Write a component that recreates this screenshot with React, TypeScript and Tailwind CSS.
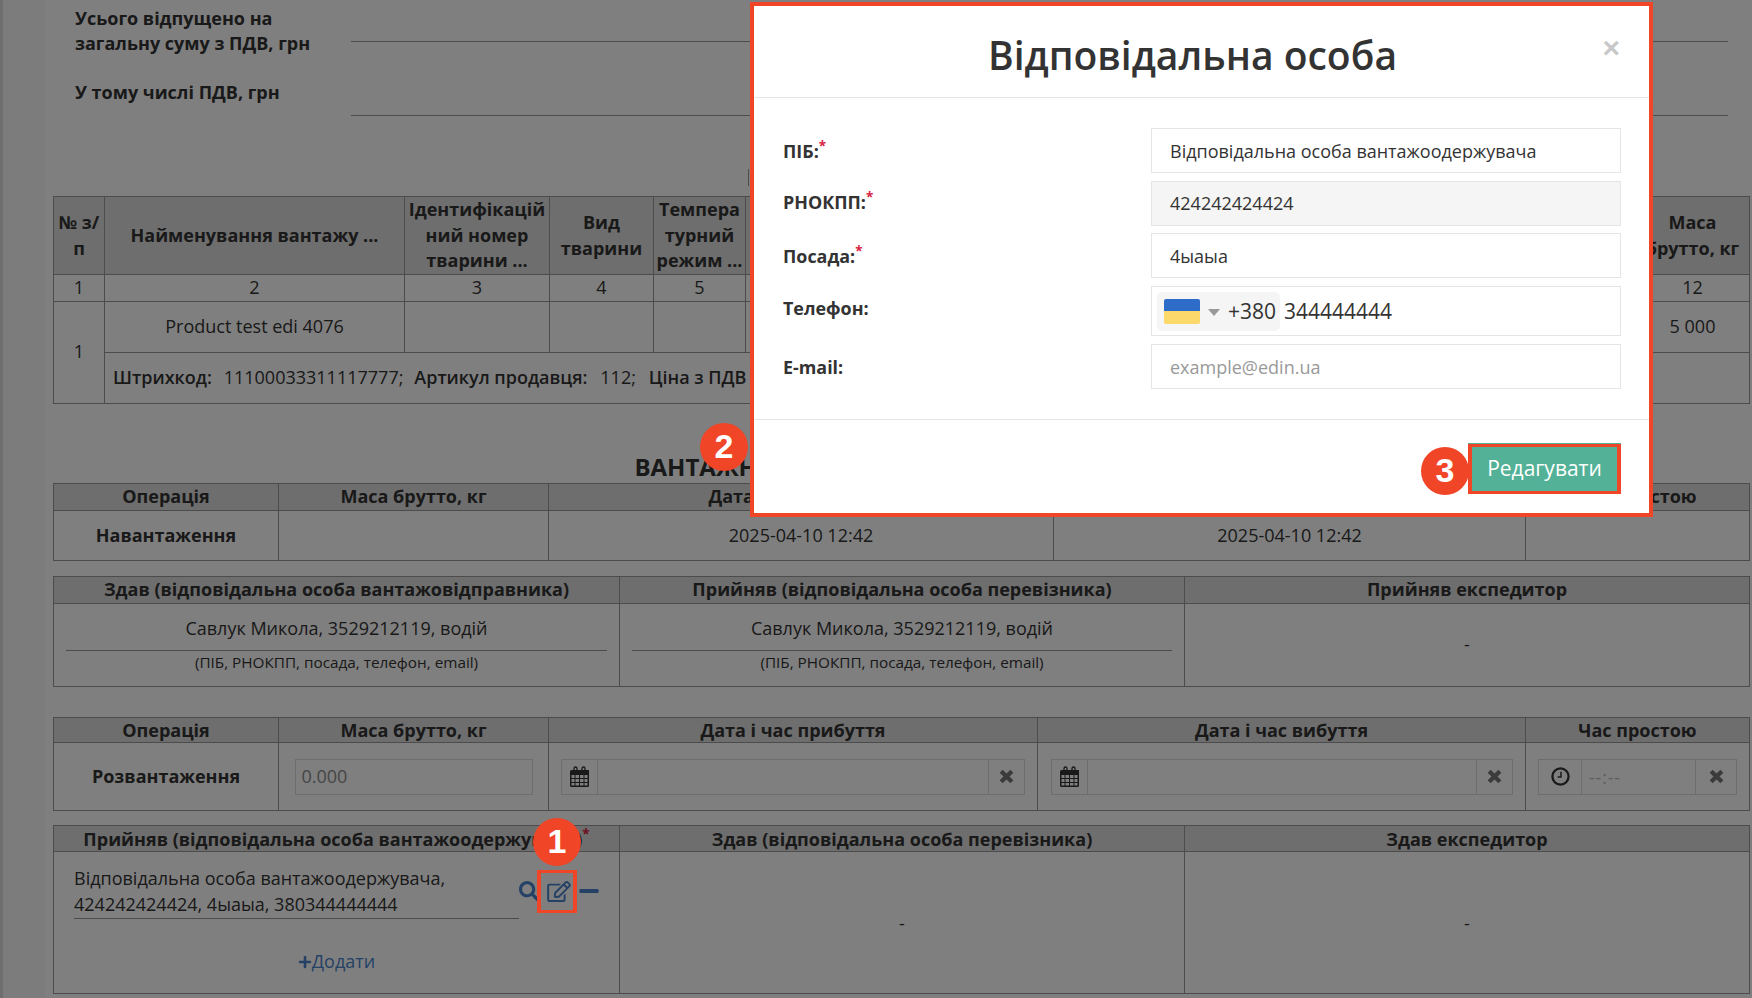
import { FaMinus, FaPlus, FaRegEdit, FaSearch } from 'react-icons/fa'

const th = 'border border-[#999] bg-[#dcdcdc] px-0 text-center align-middle font-bold'
const td = 'border border-[#999] text-center align-middle'

function CalendarIcon() {
  return (
    <svg viewBox="0 0 19 21" className="h-[21px] w-[19px] text-[#333]" fill="currentColor">
      <path d="M4 6V2.5a1.5 1.5 0 0 1 3 0V6M12 6V2.5a1.5 1.5 0 0 1 3 0V6" fill="none" stroke="currentColor" strokeWidth="1.3" />
      <path
        fillRule="evenodd"
        d="M1.5 4H19a0 0 0 0 1 0 0v15.5a1.5 1.5 0 0 1-1.5 1.5h-16A1.5 1.5 0 0 1 0 19.5v-14A1.5 1.5 0 0 1 1.5 4zM1.5 9v3h3V9zM5.5 9v3h3.5V9zM10 9v3h3.5V9zM14.5 9v3h3V9zM1.5 13v3h3v-3zM5.5 13v3h3.5v-3zM10 13v3h3.5v-3zM14.5 13v3h3v-3zM1.5 17v2.5h3V17zM5.5 17v2.5h3.5V17zM10 17v2.5h3.5V17zM14.5 17v2.5h3V17z"
      />
    </svg>
  )
}

function ClockIcon() {
  return (
    <svg viewBox="0 0 20 20" className="h-[19px] w-[19px] text-[#333]" fill="none" stroke="currentColor">
      <circle cx="10" cy="10" r="8.5" strokeWidth="2.4" />
      <path d="M10.5 5v5.5H7" strokeWidth="1.6" />
    </svg>
  )
}

function RemoveIcon() {
  return (
    <svg viewBox="0 0 14 14" className="h-[15px] w-[15px] text-[#777]" fill="none" stroke="currentColor" strokeWidth="4">
      <path d="M2 2l10 10M12 2L2 12" />
    </svg>
  )
}

function DateField({ width }: { width: string }) {
  return (
    <div className={`flex h-9 border border-[#ddd] bg-[#fff] ${width}`}>
      <span className="flex w-[36px] items-center justify-center border-r border-[#ddd]">
        <CalendarIcon />
      </span>
      <span className="flex-1" />
      <span className="flex w-[36px] items-center justify-center border-l border-[#ddd]">
        <RemoveIcon />
      </span>
    </div>
  )
}

function Badge({ n, className }: { n: number; className: string }) {
  return (
    <span
      className={`absolute flex h-12 w-12 items-center justify-center rounded-full bg-[#f04527] font-['Liberation_Sans',sans-serif] text-[34px] font-bold text-white ${className}`}
    >
      {n}
    </span>
  )
}

function Person({ className = '' }: { className?: string }) {
  return (
    <td className={`${td} h-[83px] px-[12px] ${className}`}>
      <div className="border-b border-[#999] pb-[9px] leading-[25px]">Савлук Микола, 3529212119, водій</div>
      <div className="pb-[2px] text-[15.3px] leading-[22px]">(ПІБ, РНОКПП, посада, телефон, email)</div>
    </td>
  )
}

function Field({ label, star, labelPad, mb, children }: { label: string; star?: boolean; labelPad: string; mb: string; children: React.ReactNode }) {
  return (
    <div className={`flex ${mb}`}>
      <div className={`w-[368px] text-[17.9px] leading-[25px] font-bold text-[#333] ${labelPad}`}>
        {label}
        {star ? <sup className="text-[#d8233f]">*</sup> : null}
      </div>
      {children}
    </div>
  )
}

export default function App() {
  return (
    <div className="relative flex h-[998px] w-[1752px] overflow-hidden bg-white font-['Open_Sans',sans-serif] text-[18px] leading-[25.5px] text-[#333]">
      <div className="w-[3px] bg-[#ddd]" />
      <div className="w-[43px] bg-[#f9f9f9]" />
      <main className="flex-1 pt-[6px] pr-[2px] pl-[8px]">
        <div className="flex">
          <div className="w-[298px] pl-[22px] leading-[25px] font-bold">
            Усього відпущено на
            <br />
            загальну суму з ПДВ, грн
          </div>
          <div className="mr-[22px] h-[36px] flex-1 border-b border-[#999]" />
        </div>
        <div className="mt-[24px] flex">
          <div className="w-[298px] pl-[22px] leading-[25px] font-bold">У тому числі ПДВ, грн</div>
          <div className="mr-[22px] h-[36px] flex-1 border-b border-[#999]" />
        </div>
        <div className="mt-[53px] ml-[695px] h-[17px] w-[100px] border-l border-[#999]" />
        <div className="h-[10px]" />

        <table className="w-[1696px] table-fixed border-collapse">
          <colgroup>
            <col className="w-[51px]" />
            <col className="w-[300px]" />
            <col className="w-[145px]" />
            <col className="w-[104px]" />
            <col className="w-[92px]" />
            <col className="w-[148px]" />
            <col className="w-[148px]" />
            <col className="w-[148px]" />
            <col className="w-[148px]" />
            <col className="w-[149px]" />
            <col className="w-[149px]" />
            <col className="w-[114px]" />
          </colgroup>
          <thead>
            <tr className="h-[78px]">
              <th className={th}>№ з/п</th>
              <th className={th}>Найменування вантажу ...</th>
              <th className={th}>Ідентифікацій ний номер тварини ...</th>
              <th className={th}>Вид тварини</th>
              <th className={th}>
                Темпера турний <span className="whitespace-nowrap">режим ...</span>
              </th>
              <th className={th} />
              <th className={th} />
              <th className={th} />
              <th className={th} />
              <th className={th} />
              <th className={th} />
              <th className={th}>Маса брутто, кг</th>
            </tr>
          </thead>
          <tbody>
            <tr className="h-[27px]">
              {[1, 2, 3, 4, 5, 6, 7, 8, 9, 10, 11, 12].map((n) => (
                <td key={n} className={td}>
                  {n}
                </td>
              ))}
            </tr>
            <tr className="h-[51px]">
              <td rowSpan={2} className={`${td} pb-[2px]`}>
                1
              </td>
              <td className={td}>Product test edi 4076</td>
              <td className={td} />
              <td className={td} />
              <td className={td} />
              <td className={td} />
              <td className={td} />
              <td className={td} />
              <td className={td} />
              <td className={td} />
              <td className={td} />
              <td className={td}>5 000</td>
            </tr>
            <tr className="h-[51px]">
              <td colSpan={11} className="border border-[#999] px-2 whitespace-nowrap">
                <span className="font-semibold">Штрихкод:</span>&nbsp; <span className="ml-[2.5px]">11100033311117777;</span>&nbsp;{' '}
                <span className="ml-[1.5px] font-semibold">Артикул продавця:</span>&nbsp; <span className="ml-[3.5px]">112;</span>&nbsp;{' '}
                <span className="ml-[3.5px] font-semibold">Ціна з ПДВ</span>
              </td>
            </tr>
          </tbody>
        </table>

        <h2 className="mt-[51px] mb-[4px] text-center text-[24px] leading-[24px] font-bold">
          ВАНТАЖНО-РОЗВАНТАЖУВАЛЬНІ ОПЕРАЦІЇ
        </h2>

        <table className="w-[1696px] table-fixed border-collapse">
          <colgroup>
            <col className="w-[225px]" />
            <col className="w-[270px]" />
            <col className="w-[505px]" />
            <col className="w-[472px]" />
            <col className="w-[224px]" />
          </colgroup>
          <thead>
            <tr className="h-[27px]">
              <th className={th}>Операція</th>
              <th className={th}>Маса брутто, кг</th>
              <th className={th}>Дата і час прибуття</th>
              <th className={th}>Дата і час вибуття</th>
              <th className={th}>Час простою</th>
            </tr>
          </thead>
          <tbody>
            <tr className="h-[50px]">
              <td className={`${td} font-bold`}>Навантаження</td>
              <td className={td} />
              <td className={td}>2025-04-10 12:42</td>
              <td className={td}>2025-04-10 12:42</td>
              <td className={td} />
            </tr>
          </tbody>
        </table>

        <table className="mt-[15px] w-[1696px] table-fixed border-collapse">
          <colgroup>
            <col className="w-[566px]" />
            <col className="w-[565px]" />
            <col className="w-[565px]" />
          </colgroup>
          <thead>
            <tr className="h-[27px]">
              <th className={th}>Здав (відповідальна особа вантажовідправника)</th>
              <th className={th}>Прийняв (відповідальна особа перевізника)</th>
              <th className={th}>Прийняв експедитор</th>
            </tr>
          </thead>
          <tbody>
            <tr>
              <Person />
              <Person />
              <td className={td}>-</td>
            </tr>
          </tbody>
        </table>

        <table className="mt-[30px] w-[1696px] table-fixed border-collapse">
          <colgroup>
            <col className="w-[225px]" />
            <col className="w-[270px]" />
            <col className="w-[489px]" />
            <col className="w-[488px]" />
            <col className="w-[224px]" />
          </colgroup>
          <thead className="leading-[23px]">
            <tr className="h-[25px]">
              <th className={th}>Операція</th>
              <th className={th}>Маса брутто, кг</th>
              <th className={th}>Дата і час прибуття</th>
              <th className={th}>Дата і час вибуття</th>
              <th className={th}>Час простою</th>
            </tr>
          </thead>
          <tbody>
            <tr className="h-[68px]">
              <td className={`${td} font-bold`}>Розвантаження</td>
              <td className={td}>
                <div className="mx-auto flex h-9 w-[238px] items-center border border-[#ddd] pl-[6px] text-[#8c8c8c]">0.000</div>
              </td>
              <td className={td}>
                <DateField width="mx-auto w-[464px]" />
              </td>
              <td className={td}>
                <DateField width="mx-auto w-[462px]" />
              </td>
              <td className={td}>
                <div className="mx-auto flex h-9 w-[199px] border border-[#ddd]">
                  <span className="flex w-[43px] items-center justify-center border-r border-[#ddd]">
                    <ClockIcon />
                  </span>
                  <span className="flex-1 pl-[7px] text-left text-[18px] leading-[34px] tracking-[0.8px] text-[#bbb]">--:--</span>
                  <span className="flex w-[41px] items-center justify-center border-l border-[#ddd]">
                    <RemoveIcon />
                  </span>
                </div>
              </td>
            </tr>
          </tbody>
        </table>

        <table className="mt-[14px] w-[1696px] table-fixed border-collapse">
          <colgroup>
            <col className="w-[566px]" />
            <col className="w-[565px]" />
            <col className="w-[565px]" />
          </colgroup>
          <thead className="leading-[24px]">
            <tr className="h-[26px]">
              <th className={th}>
                Прийняв (відповідальна особа вантажоодержувача)<sup className="text-[#d8233f]">*</sup>
              </th>
              <th className={th}>Здав (відповідальна особа перевізника)</th>
              <th className={th}>Здав експедитор</th>
            </tr>
          </thead>
          <tbody>
            <tr className="h-[142px]">
              <td className="border border-[#999] px-[20px] align-top">
                <div className="flex items-start pt-[13px]">
                  <div className="w-[446px] border-b border-[#999] pb-[1px] leading-[26px]">
                    Відповідальна особа вантажоодержувача, 424242424424, 4ыаыа, 380344444444
                  </div>
                  <div className="mt-[15px] flex items-center text-[#4a84cc]">
                    <FaSearch className="h-[20px] w-[20px]" />
                    <FaRegEdit className="ml-[8px] h-[21px] w-[24px]" />
                    <FaMinus className="ml-[8px] h-[22px] w-[20px]" />
                  </div>
                </div>
                <div className="mt-[30px] flex items-center justify-center text-[#4a84cc]">
                  <FaPlus className="h-[14px] w-[14px]" />
                  Додати
                </div>
              </td>
              <td className={`${td} pt-[2px]`}>-</td>
              <td className={`${td} pt-[2px]`}>-</td>
            </tr>
          </tbody>
        </table>
      </main>

      {/* затемнення під модальним вікном */}
      <div className="absolute inset-0 bg-black/50" />

      <span className="absolute top-[870px] left-[537px] h-[43px] w-[40px] border-x-4 border-y-[3px] border-[#f04527]" />
      <Badge n={1} className="top-[818px] left-[533px]" />
      <Badge n={2} className="top-[423px] left-[700px]" />

      <div className="absolute top-[2px] left-[750px] h-[515px] w-[903px] border-4 border-[#f04527] bg-white">
        <div className="relative h-[92px] border-b border-[#e5e5e5] pt-[24px] pr-[18px] text-center text-[39px] leading-[50px] font-semibold text-[#333]">
          Відповідальна особа
          <span className="absolute top-[22px] right-[29px] font-['Liberation_Sans',sans-serif] text-[30px] leading-[40px] font-bold text-[#c8c8c8]">×</span>
        </div>
        <div className="h-[322px] border-b border-[#e5e5e5] pt-[30px] pl-[29px]">
          <Field label="ПІБ:" star labelPad="pt-[11px]" mb="mb-[8px]">
            <div className="flex h-[45px] w-[470px] items-center border border-[#e5e5e5] pt-[2px] pl-[18px]">Відповідальна особа вантажоодержувача</div>
          </Field>
          <Field label="РНОКПП:" star labelPad="pt-[9px]" mb="mb-[7px]">
            <div className="flex h-[45px] w-[470px] items-center border border-[#e5e5e5] bg-[#f5f5f5] pl-[18px]">424242424424</div>
          </Field>
          <Field label="Посада:" star labelPad="pt-[11px]" mb="mb-[8px]">
            <div className="flex h-[45px] w-[470px] items-center border border-[#e5e5e5] pt-[2px] pl-[18px]">4ыаыа</div>
          </Field>
          <Field label="Телефон:" labelPad="pt-[10px]" mb="mb-[8px]">
            <div className="flex h-[50px] w-[470px] items-center border border-[#e5e5e5] pl-[5px] text-[21px]">
              <div className="flex h-[39px] w-[123px] items-center rounded-[5px] bg-[#f5f5f5] pl-[7px]">
                <span className="flex h-[25px] w-[36px] flex-col overflow-hidden rounded-[2px]">
                  <span className="h-1/2 bg-[#2d6cc9]" />
                  <span className="h-1/2 bg-[#fcd96a]" />
                </span>
                <span className="mt-[3px] ml-[8px] border-x-[6px] border-t-[7px] border-x-transparent border-t-[#999]" />
                <span className="ml-[8px] pt-[1px]">+380</span>
              </div>
              <span className="ml-[4px] pt-[1px]">344444444</span>
            </div>
          </Field>
          <Field label="E-mail:" labelPad="pt-[11px]" mb="">
            <div className="flex h-[45px] w-[470px] items-center border border-[#e5e5e5] pt-[2px] pl-[18px] text-[#999]">example@edin.ua</div>
          </Field>
        </div>
        <div className="flex justify-end pt-[24px] pr-[28px]">
          <div className="relative flex h-[50px] w-[153px] items-center justify-center border-x-4 border-y-[3px] border-[#f04527] bg-[#52b196] text-[21px] text-white shadow-[0_-1px_0_#52b196]">
            Редагувати
            <Badge n={3} className="-top-[0px] -left-[51px]" />
          </div>
        </div>
      </div>
    </div>
  )
}
